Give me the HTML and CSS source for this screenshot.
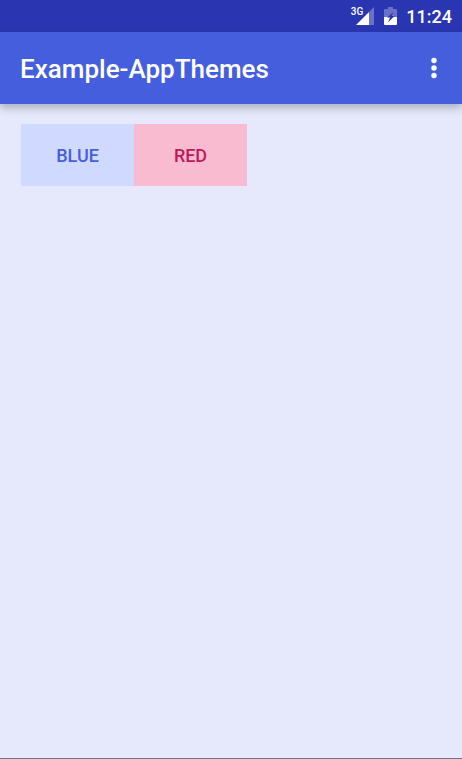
FILE: index.html
```html
<!DOCTYPE html>
<html lang="en">
<head>
<meta charset="utf-8">
<meta name="viewport" content="width=device-width, initial-scale=1">
<title>Example-AppThemes</title>
<link rel="stylesheet" href="styles.css">
</head>
<body>
<div class="status-bar">
  <div class="signal">
    <span class="network">3G</span>
    <svg width="18" height="18" viewBox="0 0 18 18" aria-hidden="true">
      <path class="faded" d="M13 5L18 0V18H13Z"/>
      <path class="solid" d="M0 18L13 5V18Z"/>
    </svg>
  </div>
  <svg class="battery" width="13" height="18" viewBox="0 0 13 18" aria-hidden="true">
    <path class="faded" d="M4 0H9V2H12Q13 2 13 3V10H0V3Q0 2 1 2H4Z"/>
    <path class="solid" d="M0 10H13V17Q13 18 12 18H1Q0 18 0 17Z"/>
    <path class="bolt" d="M9.500 5L3 10.500H6L4 15.500L10.500 9H7.500Z"/>
  </svg>
  <time class="clock">11:24</time>
</div>
<header class="app-bar">
  <h1 class="title">Example-AppThemes</h1>
  <button class="overflow" type="button" aria-label="More options">
    <svg width="6" height="22" viewBox="0 0 6 22" aria-hidden="true">
      <circle cx="3" cy="3.500" r="2.700"/>
      <circle cx="3" cy="11" r="2.700"/>
      <circle cx="3" cy="18.500" r="2.700"/>
    </svg>
  </button>
</header>
<main class="content">
  <div class="themes">
    <button class="theme blue" type="button">BLUE</button>
    <button class="theme red" type="button">RED</button>
  </div>
</main>
</body>
</html>
```
FILE: styles.css
```css
* {
  box-sizing: border-box;
}

body {
  display: flex;
  flex-direction: column;
  min-height: 100vh;
  margin: 0;
  background: #e6e9fc;
  border-bottom: 1px solid #73737e;
  font-family: Roboto, sans-serif;
  font-weight: 500;
}

.status-bar {
  display: flex;
  align-items: center;
  justify-content: flex-end;
  height: 32px;
  padding-right: 10px;
  background: #2a36b1;
  color: #fff;
}

.signal {
  position: relative;
  height: 18px;
  margin-right: 10px;
}

.signal svg,
.battery {
  display: block;
}

.battery {
  margin-right: 9px;
}

.solid {
  fill: #fff;
}

.faded {
  fill: #fff;
  fill-opacity: 0.3;
}

.network {
  position: absolute;
  top: -1px;
  right: 11px;
  font-size: 10px;
  line-height: 12px;
}

.bolt {
  fill: #2a36b1;
}

.clock {
  padding-top: 2px;
  font-size: 18px;
  line-height: 30px;
}

.app-bar {
  display: flex;
  align-items: center;
  justify-content: space-between;
  height: 72px;
  padding: 0 10px 0 20px;
  background: #455ede;
  box-shadow: 0 4px 8px rgba(0, 0, 0, 0.25);
  color: #fff;
}

.title {
  margin: 0;
  padding-top: 2px;
  font-size: 26px;
  font-weight: 500;
  line-height: 36px;
}

.overflow {
  display: flex;
  align-items: center;
  justify-content: center;
  width: 36px;
  height: 48px;
  padding: 0;
  border: 0;
  background: none;
  fill: #fff;
}

.content {
  flex: 1;
  padding: 20px 21px;
}

.themes {
  display: flex;
}

.theme {
  width: 113px;
  height: 62px;
  padding: 2px 0 0;
  border: 0;
  font: 500 18px/24px Roboto, sans-serif;
}

.blue {
  background: #d0d9ff;
  color: #455ede;
}

.red {
  background: #f8bbd0;
  color: #c2185b;
}
```
